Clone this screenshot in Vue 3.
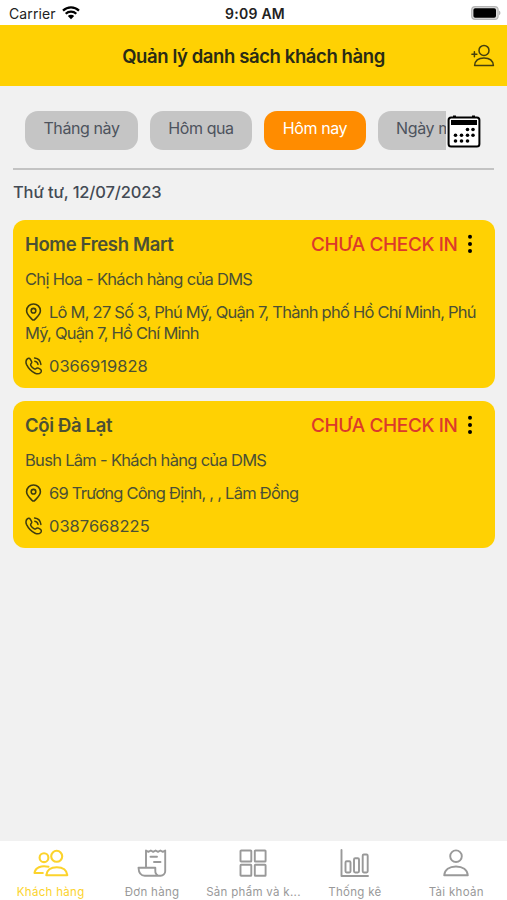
<template>
  <div class="screen">
    <div class="status-bar">
      <div class="carrier">
        <span>Carrier</span>
        <svg width="18" height="14" viewBox="0 0 18 14">
          <path d="M1 4.600a11.500 11.500 0 0 1 16 0" />
          <path d="M3.700 7.700a7.600 7.600 0 0 1 10.600 0" />
          <path class="wifi-dot" d="M5.800 10a4.600 4.600 0 0 1 6.400 0L9 13.300z" />
        </svg>
      </div>
      <div class="time">9:09 AM</div>
      <div class="battery">
        <svg width="30" height="14" viewBox="0 0 30 14">
          <rect x=".7" y=".7" width="26.4" height="12.6" rx="3.4" fill="#ddd" stroke="#b5b5b5" stroke-width="1.2" />
          <rect x="2.4" y="2.3" width="22.6" height="9.4" rx="1.8" fill="#000" />
          <path d="M28 4.8c1.9.6 1.9 3.8 0 4.4z" fill="#b5b5b5" />
        </svg>
      </div>
    </div>

    <header class="header">
      <h1>Quản lý danh sách khách hàng</h1>
      <svg class="add-user" width="24" height="24" viewBox="0 0 24 24">
        <circle cx="13" cy="6.4" r="5" />
        <path d="M3.6 21.6c.4-4.8 4.2-7.5 9.4-7.5s9 2.7 9.4 7.5z" />
        <path d="M3.4 7.8v5M.9 10.3h5" />
      </svg>
    </header>

    <div class="filters">
      <div class="chips">
        <button
          v-for="filter in filters"
          :key="filter.id"
          class="chip"
          :class="[filter.id, { active: filter.id === activeFilter }]"
          @click="activeFilter = filter.id"
        >{{ filter.label }}</button>
      </div>
      <svg class="calendar" width="34" height="33" viewBox="0 0 34 33">
        <rect x="1.6" y="2.6" width="30.8" height="28.8" rx="2.5" fill="#fff" stroke="#000" stroke-width="2" />
        <rect x="4" y="5" width="26" height="5" fill="#000" />
        <path d="M6 .6h3v2H6zM25 .6h3v2h-3z" fill="#000" />
        <circle v-for="dot in calendarDots" :key="dot.join()" :cx="dot[0]" :cy="dot[1]" r="1.8" fill="#000" />
      </svg>
    </div>

    <main class="content">
      <p class="date">Thứ tư, 12/07/2023</p>
      <div v-for="customer in customers" :key="customer.phone" class="card">
        <div class="card-top">
          <h2>{{ customer.name }}</h2>
          <span class="status">CHƯA CHECK IN</span>
          <svg class="more" width="6" height="20" viewBox="0 0 6 20">
            <circle cx="3" cy="2.7" r="2" />
            <circle cx="3" cy="9.9" r="2" />
            <circle cx="3" cy="17.1" r="2" />
          </svg>
        </div>
        <p class="contact">{{ customer.contact }}</p>
        <p class="address">
          <svg width="17" height="18" viewBox="0 0 17 18">
            <path d="M8.500 1a6.800 6.800 0 0 1 6.900 6.700c0 3.900-3.500 6.300-5.600 8.700a1.700 1.700 0 0 1-2.600 0c-2.100-2.400-5.600-4.800-5.600-8.700A6.800 6.800 0 0 1 8.500 1z" />
            <circle cx="8.500" cy="7.700" r="2.300" />
          </svg><span>{{ customer.address }}</span>
        </p>
        <p class="phone">
          <svg width="17" height="18" viewBox="0 0 17 18">
            <path d="M2.300 1.900c1-.9 2.300-.7 3 .3l1.200 2.100c.5.900.3 1.700-.6 2.600-.5.700-.5 1 .1 1.900a11 11 0 0 0 2.900 2.900c.9.600 1.300.6 1.900.1.900-.9 1.700-1.100 2.600-.6l2.100 1.200c1 .7 1.200 2 .3 3-1.400 1.500-3.400 1.900-5.700.8A18.500 18.500 0 0 1 1.600 7.600C.6 5.300.8 3.300 2.300 1.900z" />
            <path d="M9.600 1.100a7.200 7.200 0 0 1 6.300 6.300M9.800 4.200a4 4 0 0 1 3.200 3.200" />
          </svg><span>{{ customer.phone }}</span>
        </p>
      </div>
    </main>

    <nav class="tabs">
      <a class="tab active">
        <svg width="36" height="28" viewBox="0 0 36 28">
          <circle cx="11" cy="8.700" r="4.400" />
          <circle cx="23.700" cy="7.300" r="5.500" />
          <path d="M13.300 26.200c.4-4.800 4.300-8 10.500-8s10.100 3.200 10.500 8z" />
          <path d="M15.500 17.800c-7.500-1.700-13.200.8-14 6.200h8.300" />
        </svg>
        <span>Khách hàng</span>
      </a>
      <a class="tab">
        <svg width="30" height="28" viewBox="0 0 30 28">
          <path d="M9 18.500V1.500l2.400 1.300 2.400-1.300 2.400 1.300 2.400-1.300L21 2.800l2.400-1.300 2.400 1.300 2.400-1.300v20.700a4.600 4.600 0 0 1-4.600 4.600H7.800c-4.200 0-6-2.600-6.300-8h16.800v2.800a4.600 4.600 0 0 0 4.800 5.200" />
          <path d="M13.500 7.700H20M17 13h6.500" />
        </svg>
        <span>Đơn hàng</span>
      </a>
      <a class="tab">
        <svg width="28" height="28" viewBox="0 0 28 28">
          <rect x="1.500" y="1.500" width="10.800" height="11" rx=".6" />
          <rect x="15.800" y="1.500" width="10.800" height="11" rx=".6" />
          <rect x="1.500" y="15.800" width="10.800" height="11" rx=".6" />
          <rect x="15.800" y="15.800" width="10.800" height="11" rx=".6" />
        </svg>
        <span>Sản phẩm và k...</span>
      </a>
      <a class="tab">
        <svg width="30" height="28" viewBox="0 0 30 28">
          <path d="M1.500 1v26H28" />
          <rect x="5.500" y="12.300" width="5" height="11.200" rx="1.200" />
          <rect x="14" y="9.200" width="5" height="14.300" rx="1.200" />
          <rect x="22.700" y="5.500" width="5" height="18" rx="1.200" />
        </svg>
        <span>Thống kê</span>
      </a>
      <a class="tab">
        <svg width="28" height="28" viewBox="0 0 28 28">
          <circle cx="14" cy="7.200" r="5.800" />
          <path d="M2.200 26.300c.5-5.500 5-8.800 11.800-8.800s11.300 3.300 11.800 8.800z" />
        </svg>
        <span>Tài khoản</span>
      </a>
    </nav>
  </div>
</template>

<script setup>
import { ref } from 'vue';

const activeFilter = ref('today');

const filters = [
  { id: 'month', label: 'Tháng này' },
  { id: 'yesterday', label: 'Hôm qua' },
  { id: 'today', label: 'Hôm nay' },
  { id: 'tomorrow', label: 'Ngày mai' }
];

const calendarDots = [
  [20.5, 14.5], [26, 14.5],
  [8.5, 20.3], [14.5, 20.3], [20.5, 20.3], [26, 20.3],
  [8.5, 26], [14.5, 26], [20.5, 26]
];

const customers = [
  {
    name: 'Home Fresh Mart',
    contact: 'Chị Hoa - Khách hàng của DMS',
    address: 'Lô M, 27 Số 3, Phú Mỹ, Quận 7, Thành phố Hồ Chí Minh, Phú Mỹ, Quận 7, Hồ Chí Minh',
    phone: '0366919828'
  },
  {
    name: 'Cội Đà Lạt',
    contact: 'Bush Lâm - Khách hàng của DMS',
    address: '69 Trương Công Định, , , Lâm Đồng',
    phone: '0387668225'
  }
];
</script>

<style>
body {
  margin: 0;
}
</style>

<style scoped>
.screen {
  display: flex;
  flex-direction: column;
  height: 900px;
  overflow: hidden;
  background: #f1f1f1;
  color: #434a54;
  font-family: Inter, "Noto Sans", sans-serif;
}

svg {
  flex-shrink: 0;
  fill: none;
  stroke-linecap: round;
  stroke-linejoin: round;
}

h1,
h2,
p {
  margin: 0;
}

.status-bar {
  display: grid;
  grid-template-columns: 1fr auto 1fr;
  align-items: center;
  height: 25px;
  padding: 2px 6px 0 9px;
  box-sizing: border-box;
  background: #fff;
  color: #222;
  font-size: 14px;
}

.carrier {
  display: flex;
  align-items: center;
  gap: 6px;
  letter-spacing: 0.1px;
}

.carrier svg {
  margin-bottom: 2px;
  stroke: #000;
  stroke-width: 2.2;
  stroke-linecap: butt;
}

.carrier .wifi-dot {
  fill: #000;
  stroke: none;
}

.time {
  font-weight: 600;
  letter-spacing: 0.25px;
}

.battery {
  display: flex;
  justify-content: flex-end;
  margin-bottom: 1px;
}

.header {
  display: grid;
  grid-template-columns: 1fr auto 1fr;
  align-items: center;
  height: 61px;
  padding: 0 12px;
  box-sizing: border-box;
  background: #ffd103;
}

.header h1 {
  grid-column: 2;
  color: #292b16;
  font-size: 18.5px;
  font-weight: 600;
  letter-spacing: -0.4px;
}

.add-user {
  justify-self: end;
  stroke: #45400f;
  stroke-width: 1.5;
}

.filters {
  display: flex;
  align-items: center;
  gap: 1px;
  height: 81px;
  margin: 1px 13px 0;
  padding: 0 12px;
  border-bottom: 2px solid #c3c3c3;
}

.chips {
  display: flex;
  gap: 12px;
  width: 421px;
  margin-top: 6px;
  overflow: hidden;
}

.chip {
  flex: none;
  width: 102px;
  height: 39px;
  padding: 0 0 5px;
  border: none;
  border-radius: 13px;
  background: #c5c5c5;
  color: #4d535d;
  font-family: inherit;
  font-size: 16px;
  letter-spacing: -0.4px;
}

.chip.month {
  width: 113px;
}

.chip.tomorrow {
  width: 104px;
}

.chip.active {
  background: #ff8c00;
  color: #fff;
}

.calendar {
  margin-top: 7px;
}

.content {
  flex: 1;
  padding: 0 12.5px 0 13px;
}

.date {
  height: 50.4px;
  font-size: 16.5px;
  font-weight: 500;
  line-height: 44px;
  letter-spacing: -0.15px;
}

.card {
  margin-bottom: 13px;
  padding: 11.5px 12px;
  border-radius: 12px;
  background: #ffd103;
  color: #4b5035;
  font-size: 16.5px;
  line-height: 21px;
  letter-spacing: -0.7px;
}

.card-top {
  display: flex;
  align-items: center;
  height: 25px;
}

.card-top h2 {
  flex: 1;
  font-size: 18.5px;
  font-weight: 600;
  letter-spacing: -0.35px;
}

.status {
  color: #dc3a2b;
  font-size: 19px;
  font-weight: 500;
  letter-spacing: -0.4px;
}

.more {
  margin: 0 10px 0 9px;
  fill: #000;
}

.contact {
  margin-top: 12.5px;
}

.address {
  margin-top: 12px;
  letter-spacing: -0.76px;
}

.address svg,
.phone svg {
  margin-right: 7px;
  vertical-align: -3px;
  stroke: #3f3c10;
  stroke-width: 1.6;
}

.phone {
  margin-top: 11.5px;
  letter-spacing: 0;
}

.phone svg {
  stroke-width: 1.5;
}

.tabs {
  display: grid;
  grid-template-columns: repeat(5, 1fr);
  height: 59px;
  background: #fff;
}

.tab {
  display: flex;
  flex-direction: column;
  align-items: center;
  padding-top: 8px;
  color: #999;
  font-size: 11.5px;
  line-height: 14px;
  letter-spacing: 0.3px;
  white-space: nowrap;
}

.tab svg {
  margin-bottom: 8px;
  stroke: #999;
  stroke-width: 1.9;
}

.tab.active {
  color: #fcd32c;
}

.tab.active svg {
  stroke: #fcd32c;
  stroke-width: 2.1;
}
</style>
